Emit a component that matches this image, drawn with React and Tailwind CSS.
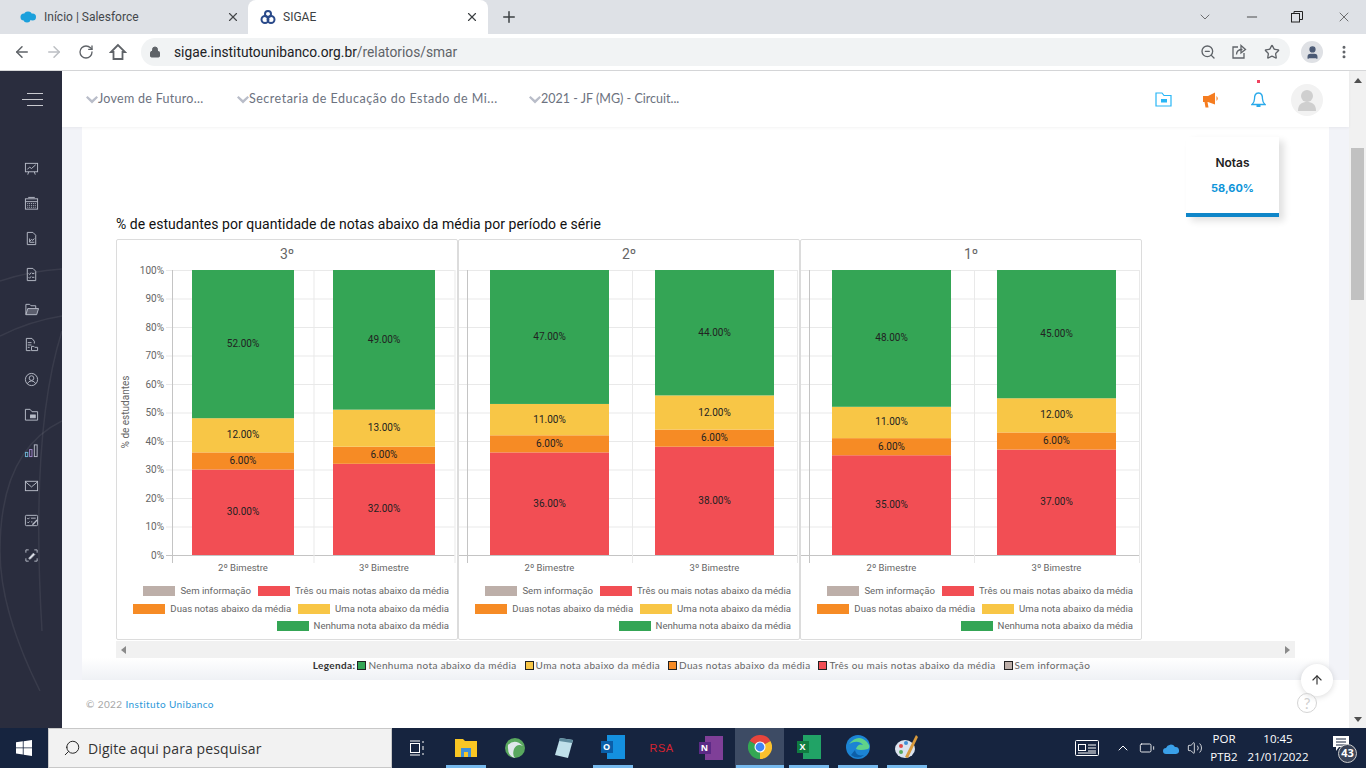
import React from 'react';
import {
  ArrowLeft, ArrowRight, RotateCw, Lock, ZoomOut, Star, MoreVertical, X, Plus,
  ChevronDown, Minus, Search, ArrowUp, ChevronUp, Battery, Volume2, User
} from 'lucide-react';

const COLORS = { green: '#34a555', yellow: '#f8c646', orange: '#f68b25', red: '#f24e54', grey: '#bdafa9' };

const panels = [
  {
    title: '3º', left: 116, x0: 172, mid: 313.5, x1: 454.5, labels: true,
    bars: [
      { name: '2º Bimestre', x: 192, w: 102, v: [30, 6, 12, 52] },
      { name: '3º Bimestre', x: 333, w: 102, v: [32, 6, 13, 49] },
    ],
  },
  {
    title: '2º', left: 458, x0: 467, mid: 632, x1: 797, labels: false,
    bars: [
      { name: '2º Bimestre', x: 490, w: 119, v: [36, 6, 11, 47] },
      { name: '3º Bimestre', x: 655, w: 119, v: [38, 6, 12, 44] },
    ],
  },
  {
    title: '1º', left: 800, x0: 809, mid: 974, x1: 1139, labels: false,
    bars: [
      { name: '2º Bimestre', x: 832, w: 119, v: [35, 6, 11, 48] },
      { name: '3º Bimestre', x: 997, w: 119, v: [37, 6, 12, 45] },
    ],
  },
];

const TOP = 270;
const BOTTOM = 555;
const yOf = (pct) => BOTTOM - (pct * (BOTTOM - TOP)) / 100;

const ChartPlot = ({ p }) => {
  const ticks = [0, 10, 20, 30, 40, 50, 60, 70, 80, 90, 100];
  const segColors = [COLORS.red, COLORS.orange, COLORS.yellow, COLORS.green];
  return (
    <svg width="340" height="315" viewBox={`${p.left + 1} 264 340 315`} className="block" fontFamily="Roboto, sans-serif" fontSize="10">
      {ticks.map((t) => (
        <line key={t} x1={p.labels ? 166 : p.left + 1} x2={p.x1} y1={yOf(t) + 0.5} y2={yOf(t) + 0.5} stroke={t === 0 ? '#c4c4c4' : '#e9e9e9'} />
      ))}
      <line x1={p.x0 + 0.5} x2={p.x0 + 0.5} y1={TOP} y2={563} stroke="#c4c4c4" />
      <line x1={p.mid + 0.5} x2={p.mid + 0.5} y1={TOP} y2={563} stroke="#e9e9e9" />
      <line x1={p.x1 + 0.5} x2={p.x1 + 0.5} y1={TOP} y2={563} stroke="#e9e9e9" />
      {p.labels && ticks.map((t) => (
        <text key={t} x="164" y={yOf(t) + 3.5} textAnchor="end" fill="#666">{t}%</text>
      ))}
      {p.labels && (
        <text x="129" y="412" textAnchor="middle" fill="#666" transform="rotate(-90 129 412)">% de estudantes</text>
      )}
      {p.bars.map((b) => {
        let acc = 0;
        return (
          <g key={b.name}>
            {b.v.map((v, i) => {
              const from = acc;
              acc += v;
              const y = yOf(acc);
              const h = yOf(from) - y;
              return (
                <g key={i}>
                  <rect x={b.x} y={y} width={b.w} height={h} fill={segColors[i]} />
                  <text x={b.x + b.w / 2} y={y + h / 2 + 3} textAnchor="middle" fill="#222">{v.toFixed(2)}%</text>
                </g>
              );
            })}
            <text x={b.x + b.w / 2} y="571" textAnchor="middle" fill="#666" fontSize="9.5">{b.name}</text>
          </g>
        );
      })}
    </svg>
  );
};

const LegendItem = ({ color, label }) => (
  <span className="flex items-center gap-[5px]">
    <span className="h-[10px] w-[32px]" style={{ backgroundColor: color }} />
    <span>{label}</span>
  </span>
);

const ChartPanel = ({ p }) => (
  <div className="h-[401px] w-[342px] shrink-0 rounded-[2px] border border-[#dcdcdc] bg-white">
    <div className="h-[24px] pt-[5px] text-center font-['Roboto',sans-serif] text-[14px] leading-[18px] text-[#666]">{p.title}</div>
    <ChartPlot p={p} />
    <div className="flex flex-col items-end gap-[1px] pr-[8px] pt-[4px] font-['Roboto',sans-serif] text-[9.6px] leading-[16.5px] text-[#666]">
      <div className="flex gap-[7px]">
        <LegendItem color={COLORS.grey} label="Sem informação" />
        <LegendItem color={COLORS.red} label="Três ou mais notas abaixo da média" />
      </div>
      <div className="flex gap-[7px]">
        <LegendItem color={COLORS.orange} label="Duas notas abaixo da média" />
        <LegendItem color={COLORS.yellow} label="Uma nota abaixo da média" />
      </div>
      <LegendItem color={COLORS.green} label="Nenhuma nota abaixo da média" />
    </div>
  </div>
);

const BrowserChrome = () => (
  <div className="shrink-0 font-['Roboto',sans-serif]">
    <div className="flex h-[34px] bg-[#dee1e6] pl-[8px]">
      <div className="flex h-[34px] w-[240px] items-center pl-[12px] pr-[8px] text-[12px] text-[#44474b]">
        <svg width="16" height="12" viewBox="0 0 16 12" className="mr-[8px]" fill="#1ba0dc">
          <circle cx="4" cy="6" r="3.5" /><circle cx="8" cy="4.500" r="4" /><circle cx="12.5" cy="6" r="3.500" /><circle cx="7" cy="8" r="3.500" />
        </svg>
        <span className="flex-1">Início | Salesforce</span>
        <X size={14} className="text-[#45474a]" strokeWidth={2} />
      </div>
      <div className="flex h-[34px] w-[240px] items-center rounded-t-[8px] bg-white pl-[12px] pr-[9px] text-[12px] text-[#3c4043]">
        <svg width="16" height="16" viewBox="0 0 16 16" className="mr-[7px]" fill="none" stroke="#2a4a8a" strokeWidth="2"><circle cx="8" cy="5" r="3" /><circle cx="5" cy="10.5" r="3.5" /><circle cx="11" cy="10.5" r="3.5" /></svg>
        <span className="flex-1">SIGAE</span>
        <X size={14} className="text-[#3c4043]" strokeWidth={2} />
      </div>
      <Plus size={18} className="ml-[12px] mt-[8px] text-[#3c4043]" strokeWidth={2} />
      <div className="ml-auto flex items-center gap-[31px] pr-[14px] text-[#333]">
        <ChevronDown size={16} strokeWidth={1} />
        <Minus size={16} strokeWidth={1.3} />
        <svg width="12" height="12" viewBox="0 0 12 12" fill="none" stroke="#222"><rect x="0.5" y="2.5" width="8" height="8.5" /><path d="M3 2.5V0.5H11.5V8.5H8.5" /></svg>
        <X size={16} strokeWidth={1} className="ml-[2px]" />
      </div>
    </div>
    <div className="flex h-[37px] items-center border-b border-[#d6d7d9] bg-white pl-[13px]">
      <ArrowLeft size={18} className="text-[#5f6368]" strokeWidth={2} />
      <ArrowRight size={18} className="ml-[14px] text-[#bcbfc3]" strokeWidth={2} />
      <RotateCw size={16} className="ml-[15px] text-[#5f6368]" strokeWidth={2} />
      <svg width="18" height="18" viewBox="0 0 18 18" className="ml-[15px]" fill="none" stroke="#5f6368" strokeWidth="1.8"><path d="M9 2L2 9H4.500V16H13.500V9H16Z" /></svg>
      <div className="ml-[14px] flex h-[28px] w-[1149px] items-center rounded-full bg-[#f1f3f4] pl-[8px] pr-[10px] text-[13.75px]">
        <Lock size={12} className="mr-[13px] text-[#5f6368]" fill="#5f6368" />
        <span className="text-[#202124]">sigae.institutounibanco.org.br</span>
        <span className="text-[#5f6368]">/relatorios/smar</span>
        <ZoomOut size={16} className="ml-auto text-[#5f6368]" />
        <svg width="16" height="16" viewBox="0 0 16 16" className="ml-[15px]" fill="none" stroke="#5f6368" strokeWidth="1.3"><path d="M7 3H2V14H13V9" /><path d="M5.500 10.500C5.500 7 8.500 5.500 11.500 5.500" /><path d="M10 1.500L14.500 5.500L10 9Z" /></svg>
        <Star size={16} className="ml-[17px] text-[#5f6368]" />
      </div>
      <div className="ml-[11px] flex h-[22px] w-[22px] items-center justify-center rounded-full bg-[#dfe1e5]">
        <User size={15} fill="#4b5a75" className="text-[#4b5a75]" />
      </div>
      <MoreVertical size={16} className="ml-[13px] text-[#5f6368]" strokeWidth={2.5} />
    </div>
  </div>
);

// sidebar glyphs, drawn on a 16 box
const sidePaths = [
  <><rect x="1.500" y="2.500" width="13" height="9" /><path d="M3.500 9L6 6.500L8 8L12.500 4M5 11.500L4 14.500M11 11.500L12 14.500" /></>,
  <><rect x="1.500" y="3" width="13" height="11" /><path d="M1.500 6H14.500M4.500 1.500H11.500" /><path d="M3.500 8H12.500M3.500 10H12.500M3.500 12H12.500" strokeDasharray="1 1" /></>,
  <><path d="M3.500 1.500H9.500L12.500 4.500V14.500H3.500Z" /><path d="M6 8V12H11M6 11L8 9L9.500 10L11 8" /></>,
  <><path d="M3.500 1.500H9.500L12.500 4.500V14.500H3.500Z" /><path d="M5 7L6 8L7.500 6M8.500 7H11M5 11L6 12L7.500 10M8.500 11H11" /></>,
  <><path d="M2 13.500V2.500H6L7.500 4H12.500V7" /><path d="M2 13.500L4 7H15.500L13.500 13.500Z" fill="#b9bdc9" fillOpacity="0.35" /></>,
  <><path d="M11 7V4.500L8.500 1.500H2.500V14.500H7" /><path d="M4 6H8M4 8.500H8M4 11H6" /><path d="M8 10H10.500L11.500 11H14.500V14.500H8Z" /></>,
  <><circle cx="8" cy="8" r="6.500" /><circle cx="8" cy="6.500" r="2.500" /><path d="M3.500 12.500Q5 9.500 8 9.500Q11 9.500 12.500 12.500" /></>,
  <><path d="M1.500 2.500H6.500L8.500 5H14.500V14H1.500Z" /><rect x="7" y="8.500" width="5" height="3" fill="#b9bdc9" /></>,
  <><rect x="1.500" y="10" width="2.500" height="4.500" stroke="#6fb6d6" /><rect x="6" y="7" width="2.500" height="7.500" stroke="#a78bd0" /><rect x="11" y="2" width="3" height="12.500" /></>,
  <><rect x="1.500" y="3.500" width="13" height="10" /><path d="M1.500 4L8 9.500L14.500 4" /></>,
  <><rect x="1.500" y="2.500" width="13" height="11" rx="1" /><path d="M3.500 5.500L4.500 6.500L6 5M7.500 5.500H12.500M3.500 9.500L4.500 10.500L6 9M7.500 9.500H9" /><path d="M9 12.500L14 7.500" strokeWidth="1.500" /></>,
  <><path d="M2 5V2H5M11 2H14V5M2 11V14H5M11 14H14V11" /><path d="M5 11L10 5.500L11.500 7L6.500 12Z" fill="#e6e8ee" /></>,
];

const Sidebar = () => (
  <aside className="relative flex w-[62px] shrink-0 flex-col items-center overflow-hidden bg-[#2a2d3e]">
    <svg width="62" height="657" viewBox="0 0 62 657" className="absolute left-0 top-0" fill="none" stroke="#fff" strokeOpacity="0.07" strokeWidth="1.5">
      <path d="M0 210 Q30 200 62 198" />
      <path d="M0 265 Q30 250 62 245" />
      <path d="M62 350 Q0 380 0 480 Q0 540 40 620" />
      <path d="M62 260 Q30 360 42 560" />
    </svg>
    <div className="relative ml-[2px] mt-[22px] flex w-[21px] flex-col items-end gap-[5px]">
      <span className="h-px w-[16px] bg-[#c9cad0]" />
      <span className="h-px w-[21px] bg-[#c9cad0]" />
      <span className="h-px w-[16px] bg-[#c9cad0]" />
    </div>
    <div className="relative mt-[55px] flex flex-col items-center gap-[20.2px]">
      {sidePaths.map((glyph, i) => (
        <svg key={i} width="15" height="15" viewBox="0 0 16 16" fill="none" stroke="#b9bdc9">{glyph}</svg>
      ))}
    </div>
  </aside>
);

const Crumb = ({ className, children }) => (
  <span className={`flex items-center ${className}`}>
    <svg width="12" height="8" viewBox="0 0 12 8" fill="#b9bdc9"><path d="M0 1.500L1.500 0L6 4L10.500 0L12 1.500L6 7.500Z" /></svg>
    {children}
  </span>
);

const Topbar = () => (
  <header className="relative z-10 flex h-[56px] shrink-0 items-center bg-white pl-[24px] pr-[26px] pt-[1px] font-['Lato',sans-serif] text-[12.5px] text-[#6c7280] shadow-[0_1px_3px_rgba(0,0,0,0.05)]">
    <Crumb className="w-[151px] tracking-[0.28px]">Jovem de Futuro...</Crumb>
    <Crumb className="w-[292px] tracking-[0.5px]">Secretaria de Educação do Estado de Mi...</Crumb>
    <Crumb className="tracking-[0px]">2021 - JF (MG) - Circuit...</Crumb>
    <div className="ml-auto flex items-center">
      <svg width="17" height="15" viewBox="0 0 17 15" fill="none" stroke="#29b6f6" strokeWidth="1.2"><path d="M1 1H7L9 3.500H16V14H1Z" /><rect x="6" y="7" width="6" height="3.500" fill="#29b6f6" stroke="none" /></svg>
      <svg width="17" height="16" viewBox="0 0 17 16" className="ml-[30px]" fill="#f57c1f"><path d="M1 4H6L13 0.500V12.500L6 10H5.500L6.500 15.500H3.500L2.500 10H1Z" /><path d="M14.500 4Q17 6.500 14.500 9Z" /></svg>
      <div className="relative ml-[32px]">
        <svg width="15" height="17" viewBox="0 0 15 17" fill="none" stroke="#29a9ea" strokeWidth="1.3"><path d="M7.500 2C4 2 3.500 5 3.500 8C3.500 11 2 12.500 1 13.500H14C13 12.500 11.500 11 11.500 8C11.500 5 11 2 7.500 2Z" /><path d="M5.500 15H9.500" strokeWidth="2" /></svg>
        <span className="absolute left-[6px] top-[-11px] h-[3px] w-[3px] bg-[#f0435f]" />
      </div>
      <div className="ml-[25px] flex h-[32px] w-[32px] items-center justify-center overflow-hidden rounded-full bg-[#f2f2f2]">
        <svg width="20" height="24" viewBox="0 0 20 24" fill="#cfcfcf"><circle cx="10" cy="8" r="6" /><path d="M1 23C1 16 5 14 10 14C15 14 19 16 19 23Z" /></svg>
      </div>
    </div>
  </header>
);

const KpiCard = () => (
  <div className="mr-[50px] flex h-[80px] w-[93px] flex-col items-center self-end border-b-[4px] border-[#0f86c9] bg-white pt-[18px] font-['Inter',sans-serif] shadow-[5px_4px_7px_rgba(0,0,0,0.12)]">
    <span className="text-[12px] font-semibold leading-[16px] text-[#222]">Notas</span>
    <span className="mt-[9px] text-[11px] font-bold leading-[16px] text-[#0f95d9]">58,60%</span>
  </div>
);

const BottomLegend = () => {
  const items = [
    [COLORS.green, 'Nenhuma nota abaixo da média'],
    [COLORS.yellow, 'Uma nota abaixo da média'],
    [COLORS.orange, 'Duas notas abaixo da média'],
    [COLORS.red, 'Três ou mais notas abaixo da média'],
    [COLORS.grey, 'Sem informação'],
  ];
  return (
    <div className="flex h-[14px] items-center justify-center pr-[42px] font-['Lato',sans-serif] text-[10px] tracking-[0.36px] text-[#666]">
      <b className="mr-[2px] text-[#333]">Legenda:</b>
      {items.map(([c, label]) => (
        <span key={label} className="mr-[8px] flex items-center gap-[2px] last:mr-0">
          <span className="h-[9px] w-[9px] border border-[#222]" style={{ backgroundColor: c }} />
          {label}
        </span>
      ))}
    </div>
  );
};

const Slot = ({ bar, active, children }) => (
  <div className={`flex h-[40px] w-[49px] shrink-0 justify-center ${active ? 'bg-[#3d4b64]' : ''}`}>
    <div className={`flex h-[40px] items-center justify-center ${active ? 'w-[48px]' : 'w-[40px]'} ${bar ? 'border-b-[3px] border-[#76b9ed]' : ''}`}>
      {children}
    </div>
  </div>
);

const OfficeTile = ({ letter, back, front }) => (
  <div className="relative h-[24px] w-[24px]">
    <span className={`absolute right-0 top-0 h-[24px] w-[18px] ${back}`} />
    <span className={`absolute left-0 top-[6px] flex h-[12px] w-[12px] items-center justify-center text-[9px] font-bold ${front}`}>{letter}</span>
  </div>
);

const Taskbar = () => (
  <footer className="flex h-[40px] shrink-0 items-center bg-[#16243f] font-['Open_Sans',sans-serif] text-white">
    <div className="flex w-[48px] justify-center">
      <svg width="16" height="16" viewBox="0 0 16 16" fill="#fff"><path d="M0 2.300 6.800 1.300V7.500H0ZM7.600 1.200 16 0V7.500H7.600ZM0 8.300H6.800V14.600L0 13.600ZM7.600 8.300H16V16L7.600 14.800Z" /></svg>
    </div>
    <div className="flex h-[40px] w-[344px] items-center border border-[#c8c8c8] bg-[#f2f2f2] pl-[14px] text-[14px] tracking-[0.1px] text-[#333]">
      <Search size={18} strokeWidth={1.3} className="mr-[7px] -scale-x-100 text-[#222]" />
      Digite aqui para pesquisar
    </div>
    <Slot>
      <svg width="16" height="16" viewBox="0 0 16 16" fill="none" stroke="#fff"><rect x="1.500" y="3.500" width="9" height="9" /><path d="M1 1H11M1 15H11M14 1V3M14 6V10M14 13V15" /></svg>
    </Slot>
    <Slot bar>
      <svg width="22" height="20" viewBox="0 0 22 20"><path d="M0 2H8L10 4H22V20H0Z" fill="#f9c623" /><rect x="6" y="11" width="10" height="9" fill="#3f8fd6" /><rect x="9" y="15" width="4" height="5" fill="#f9c623" /></svg>
    </Slot>
    <Slot>
      <svg width="22" height="22" viewBox="0 0 22 22"><circle cx="11" cy="11" r="10" fill="#59a85e" /><path d="M4 8Q11 1 19 9Q13 6 10 12Q8 18 11 21Q3 19 4 8Z" fill="#dfe7ea" /></svg>
    </Slot>
    <Slot>
      <svg width="20" height="22" viewBox="0 0 20 22"><path d="M6 1L19 3L14 21L1 18Z" fill="#bfe0ea" /><path d="M6 1L19 3L18 6L5 4Z" fill="#5d8a9c" /></svg>
    </Slot>
    <Slot bar>
      <OfficeTile letter="O" back="bg-[#1490df]" front="bg-[#0a5ea8]" />
    </Slot>
    <Slot>
      <span className="font-['Liberation_Sans',sans-serif] text-[11px] tracking-[0.5px] text-[#d8232f]">RSA</span>
    </Slot>
    <Slot>
      <OfficeTile letter="N" back="bg-[#7f3f98]" front="bg-[#5b2a86]" />
    </Slot>
    <Slot bar active>
      <svg width="24" height="24" viewBox="0 0 24 24"><path d="M12 12L1.600 6A12 12 0 0 1 22.400 6Z" fill="#e8453c" /><path d="M12 12L22.400 6A12 12 0 0 1 12 24Z" fill="#fbc02d" /><path d="M12 12L12 24A12 12 0 0 1 1.600 6Z" fill="#34a853" /><circle cx="12" cy="12" r="5.500" fill="#fff" /><circle cx="12" cy="12" r="4.400" fill="#4285f4" /></svg>
    </Slot>
    <Slot bar>
      <OfficeTile letter="X" back="bg-[#21a366]" front="bg-[#107c41]" />
    </Slot>
    <Slot bar>
      <svg width="24" height="24" viewBox="0 0 24 24"><circle cx="12" cy="12" r="12" fill="#1c84d4" /><path d="M3 9Q12 -2 21 7Q25 12 22 14Q14 16 10 14Q12 8 17 10Q12 4 3 9Z" fill="#5fd38a" /><path d="M9 15Q10 22 18 20Q12 25 5 20Z" fill="#0d5fa8" /></svg>
    </Slot>
    <Slot bar>
      <svg width="24" height="26" viewBox="0 0 24 26"><ellipse cx="10" cy="15" rx="10" ry="9" fill="#dbe3ef" /><circle cx="6" cy="12" r="2" fill="#e04848" /><circle cx="11" cy="9" r="2" fill="#3f8fd6" /><circle cx="6" cy="18" r="2" fill="#59a85e" /><path d="M21 1L23 3L13 24L10 23Z" fill="#d99a3d" /></svg>
    </Slot>
    <div className="ml-auto flex h-[40px] items-center">
      <svg width="24" height="16" viewBox="0 0 24 16" fill="none" stroke="#fff"><rect x="0.500" y="0.500" width="23" height="15" rx="1" /><rect x="3.500" y="4.500" width="7" height="6" /><path d="M13 5H21M13 8H21M13 11H21M3 13H21" /></svg>
      <ChevronUp size={16} strokeWidth={1.5} className="ml-[16px]" />
      <Battery size={16} strokeWidth={1.3} className="ml-[8px]" />
      <svg width="18" height="11" viewBox="0 0 18 11" className="ml-[7px]" fill="#3aa0e8"><path d="M4 11A3 3 0 0 1 4 5A5 5 0 0 1 13 4A3.500 3.500 0 0 1 14 11Z" /></svg>
      <Volume2 size={16} strokeWidth={1.2} className="ml-[7px]" />
      <div className="ml-[3px] w-[36px] text-center text-[11.5px] leading-[18px]">POR<br />PTB2</div>
      <div className="ml-[3px] w-[66px] text-center text-[11.5px] leading-[18px]">10:45<br />21/01/2022</div>
      <div className="relative ml-[15px] mr-[10px] h-[24px] w-[30px]">
        <svg width="16" height="15" viewBox="0 0 16 15" fill="#fff" className="ml-[7px]"><path d="M0 0H16V11H6L3 15V11H0Z" /><path d="M3 3H13M3 6H13M3 9H13" stroke="#16243f" /></svg>
        <span className="absolute left-[12px] top-[8px] flex h-[19px] w-[19px] items-center justify-center rounded-full border border-[#ccc] bg-[#3a4458] text-[11px] font-bold">43</span>
      </div>
    </div>
  </footer>
);

const App = () => (
  <div className="flex h-[768px] w-[1366px] flex-col overflow-hidden bg-white">
    <BrowserChrome />
    <div className="flex min-h-0 flex-1">
      <Sidebar />
      <main className="relative flex min-w-0 flex-1 flex-col bg-[#f2f3f8]">
        <Topbar />
        <div className="mx-[20px] flex h-[553px] shrink-0 flex-col bg-linear-to-b from-white from-[96%] to-[#eff1f5] pl-[34px] pt-[10px]">
          <KpiCard />
          <h2 className="mb-[8px] h-[14px] font-['Roboto',sans-serif] text-[14px] font-normal leading-[14px] tracking-[0.04px] text-[#111]">% de estudantes por quantidade de notas abaixo da média por período e série</h2>
          <div className="mr-[34px] flex overflow-hidden">
            {panels.map((p) => <ChartPanel key={p.title} p={p} />)}
          </div>
          <div className="mr-[34px] mt-[1px] flex h-[17px] shrink-0 items-center justify-between bg-[#f1f1f1] px-[5px]">
            <svg width="5" height="8" viewBox="0 0 5 8" fill="#8a8a8a"><path d="M5 0V8L0 4Z" /></svg>
            <svg width="5" height="8" viewBox="0 0 5 8" fill="#8a8a8a"><path d="M0 0V8L5 4Z" /></svg>
          </div>
          <BottomLegend />
        </div>
        <div className="flex flex-1 items-center bg-white pl-[24px] font-['Lato',sans-serif] text-[10px] tracking-[0.4px] text-[#a6a6a6]">
          © 2022&nbsp;<span className="text-[#2b98d9]">Instituto Unibanco</span>
        </div>
        <button className="absolute left-[1239px] top-[593px] flex h-[32px] w-[32px] items-center justify-center rounded-full bg-white shadow-[0_1px_6px_rgba(0,0,0,0.15)]">
          <ArrowUp size={14} className="text-[#333]" />
        </button>
        <span className="absolute left-[1235px] top-[622px] flex h-[20px] w-[20px] items-center justify-center rounded-full border border-[#d4d4d4] font-['Lato',sans-serif] text-[15px] text-[#cfcfcf]">?</span>
      </main>
      <div className="flex w-[17px] shrink-0 flex-col items-center bg-[#f1f1f1]">
        <div className="flex h-[77px] w-full justify-center pt-[7px]">
          <svg width="8" height="5" viewBox="0 0 8 5" fill="#505050"><path d="M0 5H8L4 0Z" /></svg>
        </div>
        <span className="h-[152px] w-[13px] bg-[#c1c1c1]" />
        <svg width="8" height="5" viewBox="0 0 8 5" fill="#505050" className="mb-[6px] mt-auto"><path d="M0 0H8L4 5Z" /></svg>
      </div>
    </div>
    <Taskbar />
  </div>
);

export default App;
